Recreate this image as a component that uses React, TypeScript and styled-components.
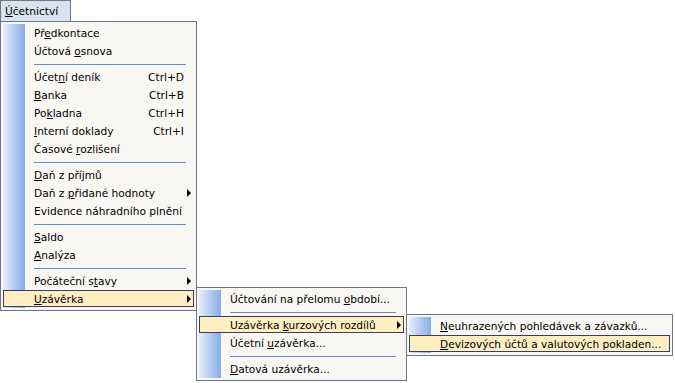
import React from "react";
import styled, { createGlobalStyle, css } from "styled-components";

const GlobalStyle = createGlobalStyle`
  html, body {
    margin: 0;
    padding: 0;
    background: #ffffff;
  }
  body {
    font-family: "DejaVu Sans", Tahoma, sans-serif;
    font-size: 10.6px;
    color: #000000;
  }
`;

const Page = styled.div`
  position: relative;
  width: 675px;
  height: 383px;
  overflow: hidden;
`;

const TopButton = styled.div`
  display: flex;
  align-items: center;
  width: 71px;
  height: 21px;
  box-sizing: border-box;
  padding-left: 4px;
  background: #d9e2ef;
  border: 1px solid #6f7888;
  border-bottom: none;
`;

const Menu = styled.div<{ $width: number }>`
  position: relative;
  width: ${(p) => p.$width}px;
  box-sizing: border-box;
  border: 1px solid #6f7586;
  padding: 2px;
  background: #f8f7f4;
`;

const SubMenu = styled(Menu)<{ $top: number }>`
  position: absolute;
  top: ${(p) => p.$top}px;
  left: calc(100% + 2px);
  z-index: 2;
`;

const Body = styled.div`
  background: linear-gradient(to right, #e4eefc, #87ace6) no-repeat 0 0 / 22px 100%;
`;

const Item = styled.div<{ $active?: boolean }>`
  position: relative;
  display: flex;
  align-items: center;
  height: 18px;
  padding-left: 31px;
  white-space: nowrap;

  ${(p) =>
    p.$active &&
    css`
      &::before {
        content: "";
        position: absolute;
        inset: 0 0 1px 0;
        background: #ffeec2;
        border: 1px solid #3c3c5e;
      }
    `}
`;

const Label = styled.span`
  position: relative;
  flex: 1;
`;

const Shortcut = styled.span`
  position: relative;
  padding-right: 10px;
`;

const Arrow = styled.span`
  position: absolute;
  right: 3px;
  top: 5px;
  width: 0;
  height: 0;
  border-top: 4px solid transparent;
  border-bottom: 4px solid transparent;
  border-left: 4px solid #000000;
`;

const Separator = styled.div`
  height: 8px;
  display: flex;
  align-items: center;
  padding-left: 31px;
  padding-right: 8px;

  &::after {
    content: "";
    flex: 1;
    height: 1px;
    background: #6a8bc6;
  }
`;

const Key = styled.u`
  text-decoration: underline;
  text-underline-offset: 1px;
`;

type Entry =
  | { sep: true }
  | { sep?: false; pre: string; key?: string; post?: string; shortcut?: string; arrow?: boolean; active?: boolean; sub?: React.ReactNode };

const Entries = ({ items }: { items: Entry[] }) => (
  <Body>
    {items.map((it, i) =>
      it.sep ? (
        <Separator key={i} />
      ) : (
        <Item key={i} $active={it.active}>
          <Label>
            {it.pre}
            {it.key && <Key>{it.key}</Key>}
            {it.post}
          </Label>
          {it.shortcut && <Shortcut>{it.shortcut}</Shortcut>}
          {it.arrow && <Arrow />}
          {it.sub}
        </Item>
      )
    )}
  </Body>
);

const devizy: Entry[] = [
  { pre: "", key: "N", post: "euhrazených pohledávek a závazků..." },
  { pre: "", key: "D", post: "evizových účtů a valutových pokladen...", active: true },
];

const uzaverka: Entry[] = [
  { pre: "Účtování na přelomu ", key: "o", post: "bdobí..." },
  { sep: true },
  {
    pre: "Uzávěrka ",
    key: "k",
    post: "urzových rozdílů",
    arrow: true,
    active: true,
    sub: (
      <SubMenu $width={267} $top={-2}>
        <Entries items={devizy} />
      </SubMenu>
    ),
  },
  { pre: "Účetní ", key: "u", post: "závěrka..." },
  { sep: true },
  { pre: "", key: "D", post: "atová uzávěrka..." },
];

const main: Entry[] = [
  { pre: "Př", key: "e", post: "dkontace" },
  { pre: "Účtová ", key: "o", post: "snova" },
  { sep: true },
  { pre: "Účet", key: "n", post: "í deník", shortcut: "Ctrl+D" },
  { pre: "", key: "B", post: "anka", shortcut: "Ctrl+B" },
  { pre: "Po", key: "k", post: "ladna", shortcut: "Ctrl+H" },
  { pre: "", key: "I", post: "nterní doklady", shortcut: "Ctrl+I" },
  { pre: "Časové ", key: "r", post: "ozlišení" },
  { sep: true },
  { pre: "", key: "D", post: "aň z příjmů" },
  { pre: "Daň z ", key: "p", post: "řidané hodnoty", arrow: true },
  { pre: "Evidence náhradního plnění" },
  { sep: true },
  { pre: "", key: "S", post: "aldo" },
  { pre: "", key: "A", post: "nalýza" },
  { sep: true },
  { pre: "Počáteční s", key: "t", post: "avy", arrow: true },
  {
    pre: "",
    key: "U",
    post: "závěrka",
    arrow: true,
    active: true,
    sub: (
      <SubMenu $width={211} $top={-3}>
        <Entries items={uzaverka} />
      </SubMenu>
    ),
  },
];

export default function App() {
  return (
    <Page>
      <GlobalStyle />
      <TopButton>
        <span>
          <Key>Ú</Key>četnictví
        </span>
      </TopButton>
      <Menu $width={197}>
        <Entries items={main} />
      </Menu>
    </Page>
  );
}
